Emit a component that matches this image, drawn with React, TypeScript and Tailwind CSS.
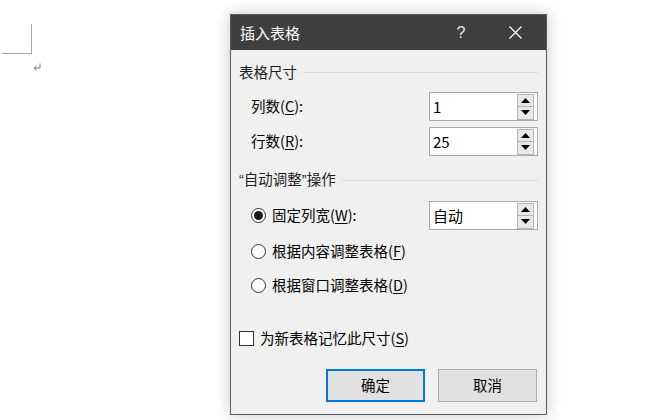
import React from 'react';

const font = { fontFamily: '"Noto Sans CJK SC", "Noto Sans", sans-serif' };
const latin = { fontFamily: '"Liberation Sans", sans-serif' };

// Accelerator letter, drawn underlined
const Key: React.FC<{ k: string }> = ({ k }) => (
  <>
    (<span className="underline underline-offset-2 decoration-1">{k}</span>)
  </>
);

const Arrow: React.FC<{ up?: boolean }> = ({ up }) => (
  <svg width="9" height="5" viewBox="0 0 9 5">
    {up ? <polygon points="0,5 9,5 4.5,0" fill="#000" /> : <polygon points="0,0 9,0 4.5,5" fill="#000" />}
  </svg>
);

const Spin: React.FC<{ value: string }> = ({ value }) => (
  <div className="flex h-[29px] w-[109px] items-center border border-[#ababab] bg-white pl-[3px] pr-[3px]">
    <span className="flex-1 text-[15px] leading-none text-black">{value}</span>
    <div className="flex flex-col">
      <div className="flex h-[13px] w-[17px] items-center justify-center border border-[#b5b5b5] bg-[#e8e8e8]">
        <Arrow up />
      </div>
      <div className="flex h-[13px] w-[17px] items-center justify-center border border-t-0 border-[#b5b5b5] bg-[#e8e8e8]">
        <Arrow />
      </div>
    </div>
  </div>
);

const GroupTitle: React.FC<{ children: React.ReactNode }> = ({ children }) => (
  <div className="flex h-[20px] items-center gap-[6px]">
    <span className="whitespace-nowrap text-[14.5px] leading-none text-[#1e1e1e]">{children}</span>
    <div className="h-px flex-1 bg-[#dadada]" />
  </div>
);

const Radio: React.FC<{ checked?: boolean }> = ({ checked }) => (
  <div className="flex h-[15px] w-[15px] items-center justify-center rounded-full border border-[#333] bg-white">
    {checked && <div className="h-[9px] w-[9px] rounded-full bg-[#1a1a1a]" />}
  </div>
);

export default function App() {
  return (
    <div className="relative h-[420px] w-[670px] overflow-hidden bg-white" style={font}>
      {/* page corner mark */}
      <div className="absolute left-[2px] top-[24px] h-[30px] w-[30px] border-b border-r border-[#a6a6a6]" />
      <svg className="absolute left-[33px] top-[63px]" width="8" height="8" viewBox="0 0 8 8">
        <path d="M7 0.5 V5 H1.5" fill="none" stroke="#7a7a7a" strokeWidth="1" />
        <path d="M3.5 3 L1 5 L3.5 7" fill="none" stroke="#7a7a7a" strokeWidth="1" />
      </svg>

      {/* dialog window */}
      <div className="absolute left-[230px] top-[14px] flex h-[401px] w-[317px] flex-col border border-[#5a5a5a] bg-[#f0f0f0] shadow-[0_0_14px_rgba(0,0,0,0.22)]">
        <div className="flex h-[35px] items-center bg-[#3f3f3f] pl-[9px] text-white">
          <span className="flex-1 text-[15px] leading-none">插入表格</span>
          <span className="w-[14px] text-center text-[16px] leading-none text-[#e8e8e8]" style={latin}>?</span>
          <svg className="ml-[41px] mr-[24px]" width="13" height="13" viewBox="0 0 13 13">
            <path d="M0.5 0.5 L12.5 12.5 M12.5 0.5 L0.5 12.5" stroke="#ffffff" strokeWidth="1.2" />
          </svg>
        </div>

        <div className="flex flex-1 flex-col px-[8px] text-[14.5px] leading-none text-black">
          <div className="mt-[12px]">
            <GroupTitle>表格尺寸</GroupTitle>
          </div>
          <div className="mt-[10px] flex items-center">
            <span className="ml-[12px] flex-1">列数<Key k="C" />:</span>
            <Spin value="1" />
          </div>
          <div className="mt-[6px] flex items-center">
            <span className="ml-[12px] flex-1">行数<Key k="R" />:</span>
            <Spin value="25" />
          </div>

          <div className="mt-[14px]">
            <GroupTitle>
              <span style={latin}>“</span>自动调整<span style={latin}>”</span>操作
            </GroupTitle>
          </div>
          <div className="mt-[11px] flex items-center">
            <div className="ml-[12px] flex flex-1 items-center gap-[6px]">
              <Radio checked />
              <span>固定列宽<Key k="W" />:</span>
            </div>
            <Spin value="自动" />
          </div>
          <div className="ml-[12px] mt-[11px] flex h-[20px] items-center gap-[6px]">
            <Radio />
            <span>根据内容调整表格<Key k="F" /></span>
          </div>
          <div className="ml-[12px] mt-[14px] flex h-[20px] items-center gap-[6px]">
            <Radio />
            <span>根据窗口调整表格<Key k="D" /></span>
          </div>

          <div className="mt-[33px] flex h-[20px] items-center gap-[6px]">
            <div className="h-[15px] w-[15px] border border-[#333] bg-white" />
            <span>为新表格记忆此尺寸<Key k="S" /></span>
          </div>

          <div className="mt-[21px] flex justify-end gap-[13px] pr-[1px]">
            <div className="flex h-[33px] w-[99px] items-center justify-center border-2 border-[#0078d7] bg-[#e1e1e1]">确定</div>
            <div className="flex h-[33px] w-[99px] items-center justify-center border border-[#adadad] bg-[#e1e1e1]">取消</div>
          </div>
        </div>
      </div>
    </div>
  );
}
